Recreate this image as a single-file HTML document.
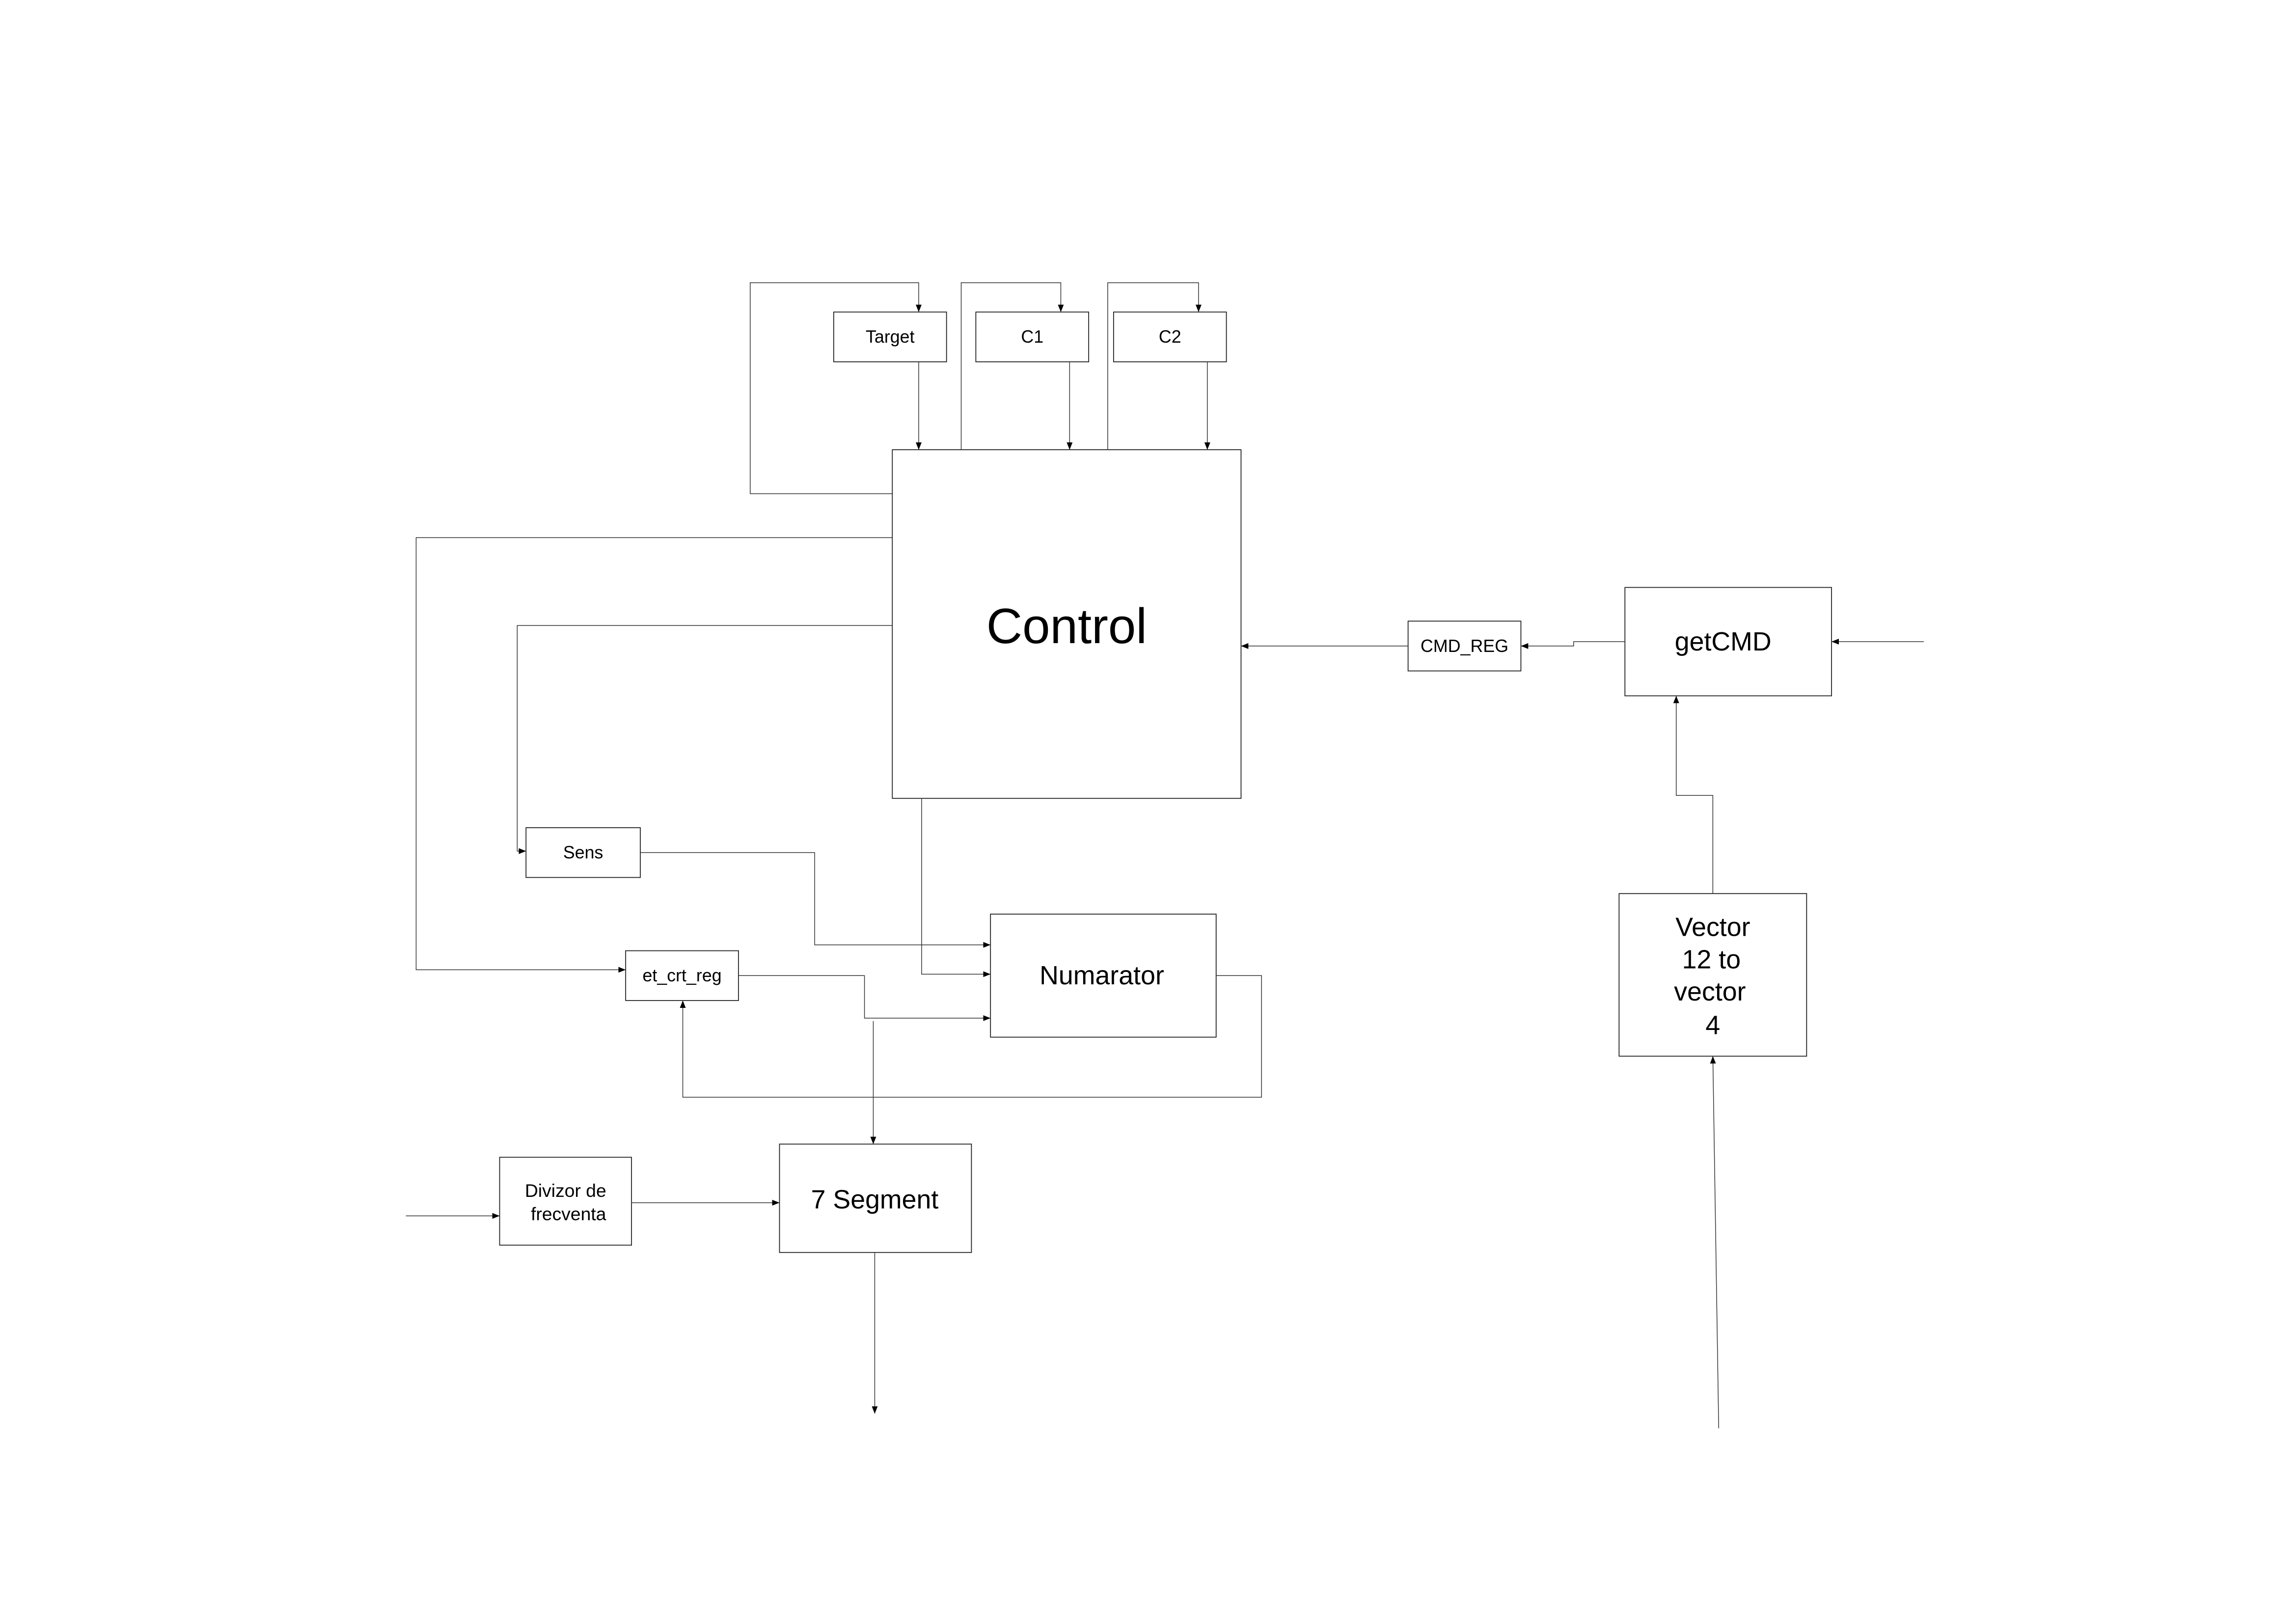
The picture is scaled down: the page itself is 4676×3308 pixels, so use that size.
<!DOCTYPE html>
<html><head><style>html,body{margin:0;padding:0;background:#fff}svg{display:block}</style></head>
<body>
<svg width="4676" height="3308" viewBox="0 0 1567 1108.6" preserveAspectRatio="none" xmlns="http://www.w3.org/2000/svg" font-family="Liberation Sans, sans-serif">
<defs><marker id="a" markerWidth="6" markerHeight="6" refX="5" refY="3" orient="auto" markerUnits="userSpaceOnUse"><path d="M0,1 L5,3 L0,5 Z" fill="#000"/></marker></defs>
<rect width="100%" height="100%" fill="#fff"/>
<g fill="none" stroke="#222" stroke-width="0.6">
<rect x="569" y="213" width="77" height="34"/>
<rect x="666" y="213" width="77" height="34"/>
<rect x="760" y="213" width="77" height="34"/>
<rect x="609" y="307" width="238" height="238"/>
<rect x="359" y="565" width="78" height="34"/>
<rect x="427" y="649" width="77" height="34"/>
<rect x="676" y="624" width="154" height="84"/>
<rect x="341" y="790" width="90" height="60"/>
<rect x="532" y="781" width="131" height="74"/>
<rect x="961" y="424" width="77" height="34"/>
<rect x="1109" y="401" width="141" height="74"/>
<rect x="1105" y="610" width="128" height="111"/>
</g>
<g fill="none" stroke="#333" stroke-width="0.5" marker-end="url(#a)">
<polyline points="609,337 512,337 512,193 627,193 627,213"/>
<polyline points="656,307 656,193 724,193 724,213"/>
<polyline points="756,307 756,193 818,193 818,213"/>
<polyline points="627,247 627,307"/>
<polyline points="730,247 730,307"/>
<polyline points="824,247 824,307"/>
<polyline points="609,367 284,367 284,662 427,662"/>
<polyline points="609,427 353,427 353,581 359,581"/>
<polyline points="437,582 556,582 556,645 676,645"/>
<polyline points="629,545 629,665 676,665"/>
<polyline points="504,666 590,666 590,695 676,695"/>
<polyline points="596,697 596,781"/>
<polyline points="830,666 861,666 861,749 466,749 466,683"/>
<polyline points="277,830 341,830"/>
<polyline points="431,821 532,821"/>
<polyline points="597,855 597,965"/>
<polyline points="961,441 847,441"/>
<polyline points="1109,438 1074,438 1074,441 1038,441"/>
<polyline points="1313,438 1250,438"/>
<polyline points="1169,610 1169,543 1144,543 1144,475"/>
<polyline points="1173,975 1169,721"/>
</g>
<g fill="#000" text-anchor="middle">
<text x="607.5" y="234" font-size="12">Target</text>
<text x="704.5" y="234" font-size="12">C1</text>
<text x="798.5" y="234" font-size="12">C2</text>
<text x="728" y="439" font-size="34">Control</text>
<text x="398" y="586" font-size="12">Sens</text>
<text x="465.5" y="670" font-size="12">et_crt_reg</text>
<text x="752" y="672" font-size="18">Numarator</text>
<text x="386" y="817" font-size="12.5">Divizor de</text>
<text x="388" y="833" font-size="12.5">frecventa</text>
<text x="597" y="825" font-size="18">7 Segment</text>
<text x="999.5" y="445" font-size="12">CMD_REG</text>
<text x="1176" y="444" font-size="18">getCMD</text>
<text x="1169" y="639" font-size="18">Vector</text>
<text x="1168" y="661" font-size="18">12 to</text>
<text x="1167" y="683" font-size="18">vector</text>
<text x="1169" y="706" font-size="18">4</text>
</g>
</svg>
</body></html>
